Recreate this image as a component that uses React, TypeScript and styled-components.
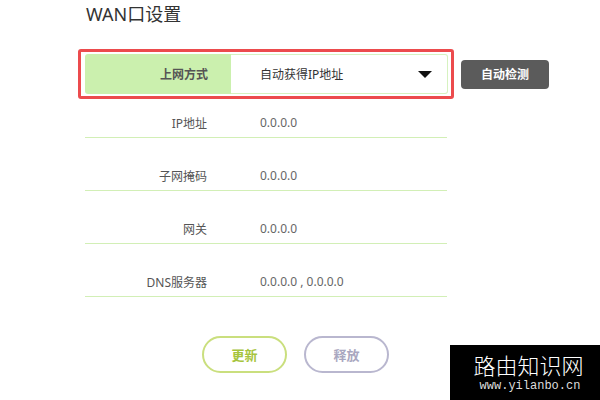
import * as React from "react";
import styled, { createGlobalStyle } from "styled-components";

const GlobalStyle = createGlobalStyle`
  html, body {
    margin: 0;
    padding: 0;
    background: #ffffff;
  }
  body {
    font-family: "Noto Sans", "Noto Sans CJK SC", sans-serif;
  }
`;

const Page = styled.div`
  position: relative;
  width: 600px;
  height: 400px;
  overflow: hidden;
  box-sizing: border-box;
  padding-left: 78px;
`;

const Title = styled.h1`
  margin: 0 0 0 8px;
  height: 49px;
  font-size: 18px;
  font-weight: normal;
  line-height: 28px;
  color: #333333;
`;

const TopLine = styled.div`
  display: flex;
  align-items: center;
`;

const Highlight = styled.div`
  display: flex;
  padding: 2px 3px 2px 4px;
  border: 3px solid #ec4b4d;
  border-radius: 3px;
`;

const LabelCell = styled.div`
  width: 146px;
  height: 40px;
  box-sizing: border-box;
  padding-right: 23px;
  display: flex;
  align-items: center;
  justify-content: flex-end;
  background: #cbf0ae;
  border-radius: 3px 0 0 3px;
  font-size: 12px;
  font-weight: bold;
  color: #555555;
`;

const Select = styled.div`
  width: 217px;
  height: 40px;
  box-sizing: border-box;
  padding: 0 15px 0 29px;
  display: flex;
  align-items: center;
  justify-content: space-between;
  border: 1px solid #d6f2c0;
  border-left: none;
  border-radius: 0 3px 3px 0;
  font-size: 12px;
  color: #333333;
`;

const Caret = styled.span`
  width: 0;
  height: 0;
  border-left: 7px solid transparent;
  border-right: 7px solid transparent;
  border-top: 7px solid #111111;
`;

const DetectButton = styled.button`
  margin-left: 7px;
  width: 88px;
  height: 29px;
  border: none;
  border-radius: 4px;
  background: #5b5b5b;
  color: #ffffff;
  font-family: inherit;
  font-size: 12px;
  font-weight: bold;
  padding: 0;
`;

const Rows = styled.div`
  margin-left: 7px;
  width: 362px;
`;

const Row = styled.div`
  display: flex;
  align-items: center;
  height: 29px;
  padding-top: 23px;
  border-bottom: 1px solid #d2efb6;
  font-size: 12px;
  color: #666666;

  &:first-child {
    padding-top: 9px;
  }
`;

const RowLabel = styled.div`
  width: 146px;
  box-sizing: border-box;
  padding-right: 24px;
  text-align: right;
  color: #555555;
`;

const RowValue = styled.div`
  padding-left: 29px;
`;

const Actions = styled.div`
  display: flex;
  gap: 17px;
  margin: 39px 0 0 124px;
`;

const PillButton = styled.button<{ $tone: "green" | "grey" }>`
  width: 85px;
  height: 37px;
  padding: 0;
  background: #ffffff;
  border-radius: 19px;
  border: 2px solid ${(p) => (p.$tone === "green" ? "#cadf7e" : "#b9b7cf")};
  color: ${(p) => (p.$tone === "green" ? "#a6c43c" : "#a9a7c0")};
  font-family: inherit;
  font-size: 13px;
  font-weight: bold;
`;

const Watermark = styled.div`
  position: absolute;
  left: 450px;
  top: 345px;
  width: 150px;
  height: 55px;
  background: #000000;
  color: #ffffff;
  display: flex;
  flex-direction: column;
  align-items: center;
`;

const MarkName = styled.div`
  margin-top: 7px;
  padding-left: 7px;
  font-family: "Noto Sans CJK SC", sans-serif;
  font-weight: 300;
  font-size: 22px;
  line-height: 24px;
`;

const MarkUrl = styled.div`
  margin-top: 3px;
  padding-left: 10px;
  font-family: "Liberation Mono", monospace;
  font-size: 12px;
  line-height: 14px;
  color: #dddddd;
`;

const fields = [
  { label: "IP地址", value: "0.0.0.0" },
  { label: "子网掩码", value: "0.0.0.0" },
  { label: "网关", value: "0.0.0.0" },
  { label: "DNS服务器", value: "0.0.0.0 , 0.0.0.0" },
];

export default function App() {
  return (
    <>
      <GlobalStyle />
      <Page>
        <Title>WAN口设置</Title>
        <TopLine>
          <Highlight>
            <LabelCell>上网方式</LabelCell>
            <Select>
              <span>自动获得IP地址</span>
              <Caret />
            </Select>
          </Highlight>
          <DetectButton>自动检测</DetectButton>
        </TopLine>
        <Rows>
          {fields.map((f) => (
            <Row key={f.label}>
              <RowLabel>{f.label}</RowLabel>
              <RowValue>{f.value}</RowValue>
            </Row>
          ))}
        </Rows>
        <Actions>
          <PillButton $tone="green">更新</PillButton>
          <PillButton $tone="grey">释放</PillButton>
        </Actions>
        <Watermark>
          <MarkName>路由知识网</MarkName>
          <MarkUrl>www.yilanbo.cn</MarkUrl>
        </Watermark>
      </Page>
    </>
  );
}
